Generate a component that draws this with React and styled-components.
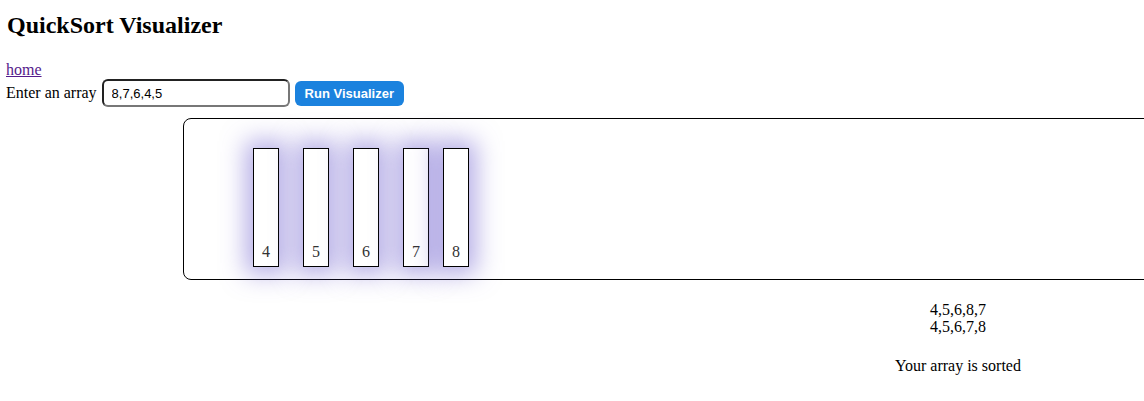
import React from 'react';
import styled, {createGlobalStyle} from 'styled-components';

const GlobalStyle = createGlobalStyle`
  body {
    margin: 8px 0 8px 6px;
    font-family: "Liberation Serif", "Times New Roman", serif;
    font-size: 16px;
    color: #000;
    background: #fff;
  }
`;

// Clips the wide visualizer box at the window edge.
const Page = styled.div`
  overflow: hidden;
`;

const Title = styled.h2`
  font-size: 24px;
  font-weight: bold;
  margin: 4px 0 22px 1px;
`;

const HomeLink = styled.a`
  color: #551a8b;
  text-decoration: underline;
  display: block;
`;

const Form = styled.div`
  display: flex;
  align-items: center;
  gap: 5px;
`;

const ArrayInput = styled.input`
  width: 188px;
  height: 28px;
  box-sizing: border-box;
  border: 2px solid #222;
  border-color: #222 #777 #777 #222;
  border-radius: 6px;
  padding: 0 8px;
  font-family: "Liberation Sans", Arial, sans-serif;
  font-size: 13px;
  outline: none;
`;

const RunButton = styled.button`
  height: 25px;
  padding: 0 10px;
  border: none;
  border-radius: 6px;
  background: #1b82de;
  color: #fff;
  font-family: "Liberation Sans", Arial, sans-serif;
  font-size: 13px;
  font-weight: bold;
`;

const Stage = styled.div`
  margin: 11px 0 8px 177px;
  width: 1550px;
`;

const BarBox = styled.div`
  position: relative;
  height: 160px;
  border: 1px solid #000;
  border-radius: 8px;
`;

const Bar = styled.div`
  position: absolute;
  top: 29px;
  width: 24px;
  height: 111px;
  border: 1px solid #000;
  background: #fff;
  box-shadow: 0 0 24px 7px rgba(106, 90, 205, 0.5);
  display: flex;
  align-items: flex-end;
  justify-content: center;
  padding-bottom: 6px;
  font-size: 16px;
  line-height: 1;
  color: #333;
`;

const Log = styled.div`
  text-align: center;
  margin-top: 21px;
  font-size: 16px;
  line-height: 17px;
`;

const Sorted = styled.p`
  text-align: center;
  margin: 22px 0 0;
  font-size: 16px;
`;

const bars = [
  {value: 4, left: 69},
  {value: 5, left: 119},
  {value: 6, left: 169},
  {value: 7, left: 219},
  {value: 8, left: 259},
];

export default function App() {
  return (
    <Page>
      <GlobalStyle/>
      <Title>QuickSort Visualizer</Title>
      <HomeLink href="#">home</HomeLink>
      <Form>
        <span>Enter an array</span>
        <ArrayInput defaultValue="8,7,6,4,5"/>
        <RunButton>Run Visualizer</RunButton>
      </Form>
      <Stage>
        <BarBox>
          {bars.map((b) => (
            <Bar key={b.value} style={{left: b.left}}>{b.value}</Bar>
          ))}
        </BarBox>
        <Log>
          <div>4,5,6,8,7</div>
          <div>4,5,6,7,8</div>
        </Log>
        <Sorted>Your array is sorted</Sorted>
      </Stage>
    </Page>
  );
}
